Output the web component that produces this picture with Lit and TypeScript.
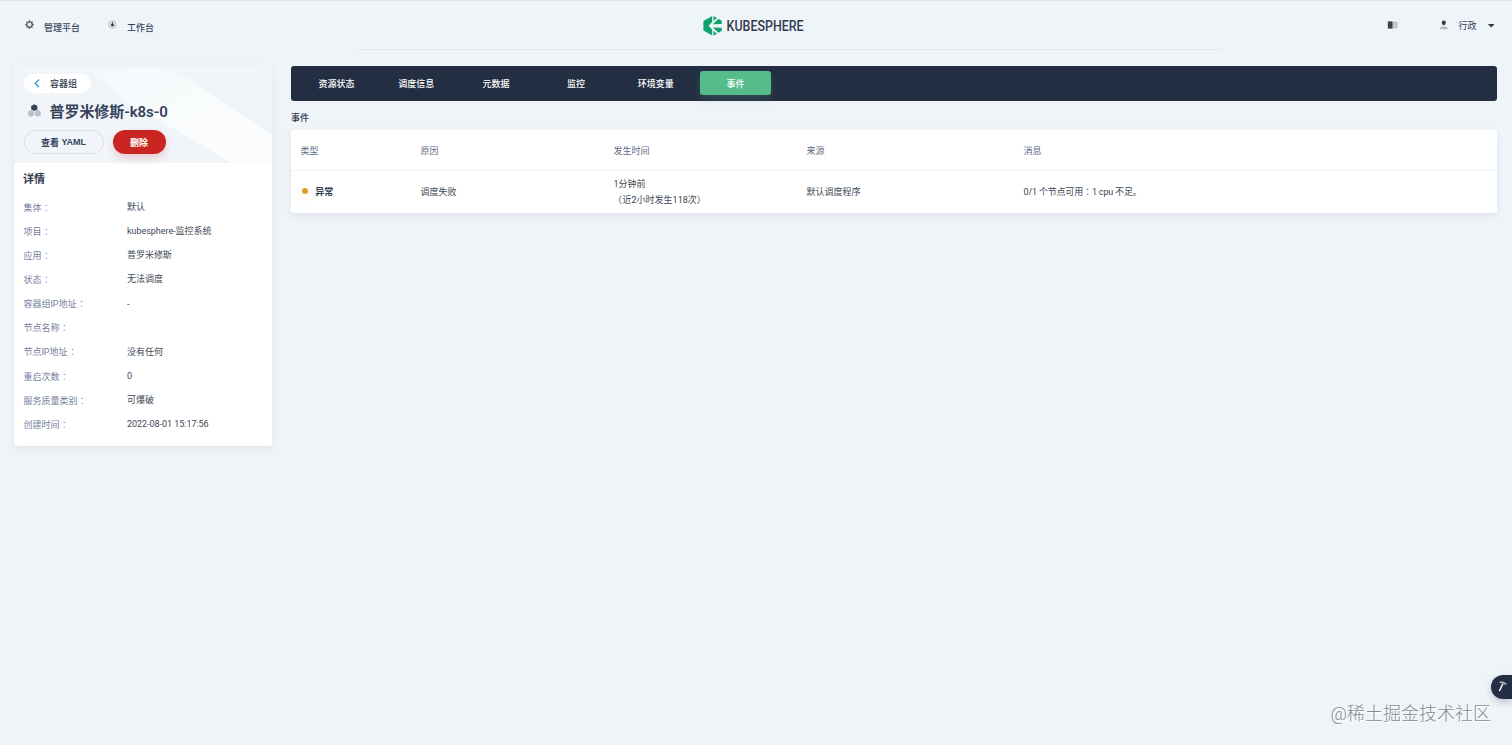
import { LitElement, html, css } from "lit";
import { customElement } from "lit/decorators.js";
import { classMap } from "lit/directives/class-map.js";

const details: [string, string][] = [
  ["集体", "默认"],
  ["项目", "kubesphere-监控系统"],
  ["应用", "普罗米修斯"],
  ["状态", "无法调度"],
  ["容器组IP地址", "-"],
  ["节点名称", ""],
  ["节点IP地址", "没有任何"],
  ["重启次数", "0"],
  ["服务质量类别", "可爆破"],
  ["创建时间", "2022-08-01 15:17:56"],
];

const tabs = ["资源状态", "调度信息", "元数据", "监控", "环境变量", "事件"];

@customElement("top-bar")
class TopBar extends LitElement {
  static styles = css`
    :host { display: block; height: 65.5px; box-sizing: border-box; border-top: 1px solid #dbe3ed; }
    .bar { display: grid; grid-template-columns: 1fr 106px 1fr; height: 48px; }
    .left { display: flex; align-items: flex-start; padding: 19px 0 0 25px; color: #36435c; font-weight: 500; font-size: 9px; line-height: 17px; }
    .left svg { flex: none; }
    .left span { white-space: nowrap; }
    .lab1 { margin-left: 10px; width: 64px; }
    .lab2 { margin-left: 10px; }
    .logo { padding-top: 14px; }
    .right { display: flex; align-items: center; justify-content: flex-end; padding: 0 17px 0 0; height: 48px; font-size: 9px; color: #36435c; }
    .book { margin: -1px 41px 0 0; }
    .name { margin: 1px 10.5px 0 10.5px; }
    .rule { height: 1px; margin: 0 290px 0 358px; background: #e2e9f3; }
    svg { display: block; overflow: visible; }
  `;
  render() {
    return html`
      <div class="bar">
        <div class="left">
          <svg width="9" height="10" viewBox="0 0 9 10">
            <path d="M4.5 .3v8.6M.2 4.6h8.6M1.5 1.6l6 6M7.5 1.6l-6 6" stroke="#5a6575" stroke-width="1.2" />
            <circle cx="4.5" cy="4.6" r="2.8" fill="#e3e9ef" stroke="#4a5565" stroke-width="1.3" />
          </svg>
          <span class="lab1">管理平台</span>
          <svg width="9" height="10" viewBox="0 0 9 10">
            <circle cx="4.3" cy="4.5" r="3.7" fill="#dfe4ea" stroke="#b1b9c3" stroke-width=".8" />
            <path d="M4.4 1.4L5 3.8l1.3 1.4-1.9 1.3-1.9-1.3 1.3-1.4z" fill="#26303f" />
          </svg>
          <span class="lab2">工作台</span>
        </div>
        <svg class="logo" width="106" height="24" viewBox="0 0 106 24">
          <path d="M9.2 1.1L.4 6v9.6l8.8 4.9v-5.8L5.6 10.8l3.6-3.9z" fill="#12a26c" />
          <path d="M10.5 .9L14 2.9l-3.5 2.9zM15.3 3.8l3.5 2v3.1L9.8 9.2zM9.8 12.4l9 .3v3.1l-3.4 2zM10.5 15.8l3.5 3-3.5 1.9z" fill="#12a26c" />
          <text x="23.6" y="16.2" font-family="Roboto, sans-serif" font-size="15.5" font-weight="500" fill="#303a4e" textLength="77" lengthAdjust="spacingAndGlyphs">KUBESPHERE</text>
        </svg>
        <div class="right">
          <svg class="book" width="11" height="8" viewBox="0 0 11 8">
            <path d="M.8 .4h4.8v7.2H.8z" fill="#36414e" />
            <path d="M6 .7h4.5v6.6H6z" fill="#bdc5cd" />
          </svg>
          <svg width="9" height="10" viewBox="0 0 9 10">
            <path d="M1 9.2V7.8Q1 6.2 4.7 6.2t3.9 1.6v1.4z" fill="#b3bbc5" />
            <ellipse cx="4.8" cy="2.8" rx="2" ry="2.4" fill="#303b4a" />
          </svg>
          <span class="name">行政</span>
          <svg width="8" height="5" viewBox="0 0 8 5"><path d="M.9 1.1h6.7L4.2 4.6z" fill="#303b4a" /></svg>
        </div>
      </div>
      <div class="rule"></div>
    `;
  }
}

@customElement("pod-card")
class PodCard extends LitElement {
  static styles = css`
    :host { display: block; width: 258px; }
    .card { height: 380px; border-radius: 3px; background: #fff; box-shadow: 0 3px 7px rgba(36, 46, 66, 0.07); overflow: hidden; }
    .head { position: relative; height: 97px; box-sizing: border-box; padding: 8px 10px 0; background: #f1f5f9; }
    .wash { position: absolute; inset: 0; }
    .body { position: relative; }
    .back { display: flex; align-items: center; width: 67px; height: 19px; border-radius: 10px; background: #fff; font-size: 9px; font-weight: 500; color: #303a4e; box-sizing: border-box; padding-left: 10px; }
    .back span { margin-left: 10px; }
    .title { display: flex; align-items: center; margin: 6.5px 0 0 3px; height: 23px; font-size: 15px; font-weight: 600; color: #36435c; white-space: nowrap; letter-spacing: -0.05px; }
    .title span { margin-left: 7.5px; }
    .actions { display: flex; gap: 9px; margin: 8px 0 0 -0.5px; }
    .btn { height: 24px; border-radius: 12px; box-sizing: border-box; display: flex; align-items: center; justify-content: center; font-size: 9px; font-weight: 600; color: #36435c; }
    .plain { width: 80px; border: 1px solid #d9e0e8; background: #f1f5f9; }
    .latin { font-family: "Liberation Sans", sans-serif; font-size: 9px; margin-left: 2.5px; }
    .danger { width: 53px; background: #ca2621; color: #fff; font-weight: 700; box-shadow: 0 4px 8px rgba(202, 38, 33, 0.2); }
    h3 { margin: 9px 0 0 9px; font-size: 11px; line-height: 16px; font-weight: 600; color: #303a4e; }
    .rows { padding: 7.5px 9px 0; }
    .row { display: grid; grid-template-columns: 104px 1fr; height: 24.17px; line-height: 24px; font-size: 9px; white-space: nowrap; color: #404956; }
    .key { color: #747f9b; padding: 0.5px 0 0 0.4px; }
    .val { letter-spacing: -0.04px; }
    .colon { font-family: "Noto Sans CJK TC", sans-serif; margin-left: 0.4px; }
    svg { display: block; }
  `;
  render() {
    return html`
      <div class="card">
        <div class="head">
          <svg class="wash" width="258" height="97" viewBox="0 0 258 97">
            <defs>
              <linearGradient id="w" x1="0" y1="0.2" x2="0.6" y2="0.8">
                <stop offset="0" stop-color="#f6f9fb" />
                <stop offset="1" stop-color="#fafcfd" />
              </linearGradient>
            </defs>
            <path d="M78 6Q86 2 94 2h48q16 2 34 12l82 55v28h-40q-48-29-90-52Q104 30 78 6z" fill="url(#w)" />
          </svg>
          <div class="body">
            <div class="back">
              <svg width="6" height="9" viewBox="0 0 6 9"><path d="M5 .5L1.2 4.4 5 8.3" fill="none" stroke="#3d9fdb" stroke-width="1.4" /></svg>
              <span>容器组</span>
            </div>
            <div class="title">
              <svg width="15" height="14" viewBox="0 0 15 14">
                <path d="M7.3.2l3.1 1.7v3.5L7.3 7.1 4.2 5.4V1.9z" fill="#36435c" />
                <path d="M4 6.1l3 1.7v3.4l-3 1.7-3-1.7V7.8zM10.8 6.1l3 1.7v3.4l-3 1.7-3-1.7V7.8z" fill="#b8c0cb" />
              </svg>
              <span>普罗米修斯-k8s-0</span>
            </div>
            <div class="actions">
              <div class="btn plain">查看<span class="latin">YAML</span></div>
              <div class="btn danger">删除</div>
            </div>
          </div>
        </div>
        <h3>详情</h3>
        <div class="rows">
          ${details.map(([k, v]) => html`<div class="row"><span class="key">${k}<span class="colon" lang="zh-TW">：</span></span><span class="val">${v}</span></div>`)}
        </div>
      </div>
    `;
  }
}

@customElement("event-panel")
class EventPanel extends LitElement {
  static styles = css`
    :host { display: block; flex: 1; font-size: 9px; }
    .tabs { display: flex; align-items: center; gap: 8.8px; height: 35px; box-sizing: border-box; padding-left: 10px; border-radius: 3px; background: #242e42; }
    .tab { width: 71px; height: 24px; line-height: 26px; border-radius: 3px; text-align: center; color: #fff; font-weight: 500; }
    .on { background: #55bc8a; box-shadow: 0 4px 8px rgba(85, 188, 138, 0.2); }
    .heading { margin-top: 8.5px; height: 21px; line-height: 18px; font-weight: 500; color: #303a4e; }
    .table { background: #fff; border-radius: 3px; box-shadow: 0 3px 7px rgba(36, 46, 66, 0.07); color: #404956; }
    .line { display: grid; grid-template-columns: 120px 193px 193px 217px 1fr; align-items: center; padding-left: 9.5px; white-space: nowrap; }
    .names { height: 41px; box-sizing: border-box; border-bottom: 1px solid #edf1f5; color: #5f6b88; padding-top: 1px; }
    .entry { height: 42px; }
    .kind { display: flex; align-items: center; font-weight: 600; color: #303a4e; margin-top: -1px; }
    .dot { width: 6px; height: 6px; border-radius: 50%; background: #e0992c; margin: -2px 7.5px 0 1.3px; box-shadow: 0 4px 8px rgba(245, 166, 35, 0.25); }
    .when { line-height: 15px; padding-top: 1px; }
    .cell { margin-top: -1px; }
    .msg { letter-spacing: -0.17px; }
    .wide { font-family: "Noto Sans CJK TC", sans-serif; }
    .open { margin: 0 0.5px 0 -0.5px; }
  `;
  render() {
    return html`
      <div class="tabs">
        ${tabs.map((t) => html`<div class=${classMap({ tab: true, on: t === "事件" })}>${t}</div>`)}
      </div>
      <div class="heading">事件</div>
      <div class="table">
        <div class="line names"><span>类型</span><span>原因</span><span>发生时间</span><span>来源</span><span>消息</span></div>
        <div class="line entry">
          <span class="kind"><i class="dot"></i>异常</span>
          <span class="cell">调度失败</span>
          <span class="when">1分钟前<br /><span class="wide open" lang="zh-TW">（</span>近2小时发生118次<span class="wide" lang="zh-TW">）</span></span>
          <span class="cell">默认调度程序</span>
          <span class="cell msg">0/1 个节点可用<span class="wide" lang="zh-TW">：</span>1 cpu 不足。</span>
        </div>
      </div>
    `;
  }
}

@customElement("app-root")
class AppRoot extends LitElement {
  static styles = css`
    :host { display: block; position: relative; width: 100%; height: 745px; overflow: hidden; background: #eff4f9; font-family: Roboto, "Noto Sans CJK SC", sans-serif; }
    .main { display: flex; align-items: flex-start; gap: 19px; padding: 0 15px 0 14px; }
    .tool { position: absolute; right: 0; bottom: 46.5px; width: 21px; height: 24px; border-radius: 12px 0 0 12px; background: #242e42; box-shadow: 0 3px 7px rgba(36, 46, 66, 0.25); }
    .mark { position: absolute; right: 21px; bottom: 18px; font-size: 18px; line-height: 26px; font-weight: 300; color: #868b91; text-shadow: 1px 1px 0 #fff; white-space: nowrap; }
  `;
  render() {
    return html`
      <top-bar></top-bar>
      <div class="main"><pod-card></pod-card><event-panel></event-panel></div>
      <div class="tool">
        <svg width="21" height="24" viewBox="0 0 21 24">
          <path d="M12 8.5L8.4 16" stroke="#fff" stroke-width="1.5" />
          <path d="M8.7 7.4Q12 6.2 15.3 9.6" fill="none" stroke="#aab3c2" stroke-width="1.6" />
        </svg>
      </div>
      <div class="mark">@稀土掘金技术社区</div>
    `;
  }
}
